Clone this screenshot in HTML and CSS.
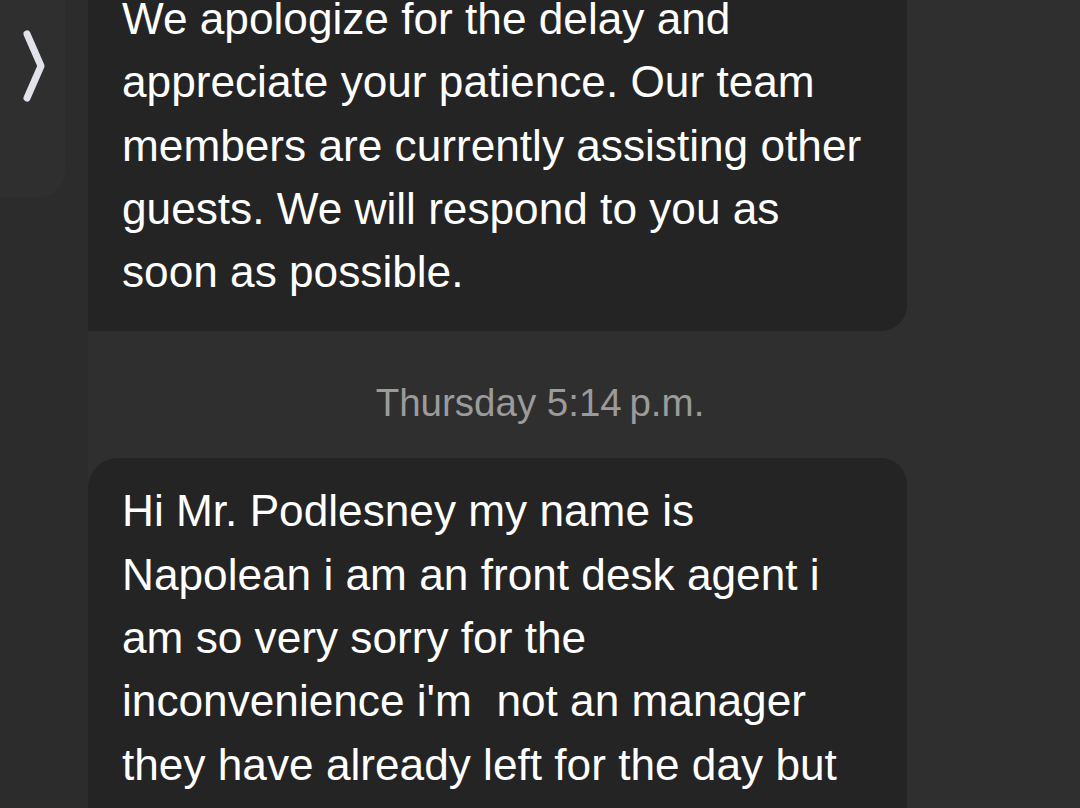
FILE: index.html
```html
<!DOCTYPE html>
<html lang="en">
<head>
<meta charset="UTF-8">
<title>Messages</title>
<link rel="stylesheet" href="styles.css">
</head>
<body>
<div class="screen">

  <div class="side">
    <div class="side-tab">
      <svg class="chevron" width="30" height="80" viewBox="0 0 30 80">
        <path d="M7 6 L21 38 L7 70" fill="none" stroke="#e2e2ea" stroke-width="7" stroke-linecap="round" stroke-linejoin="round"/>
      </svg>
    </div>
  </div>

  <div class="thread">
    <div class="bubble bubble-first">
      We apologize for the delay and<br>
      appreciate your patience. Our team<br>
      members are currently assisting other<br>
      guests. We will respond to you as<br>
      soon as possible.
    </div>

    <div class="stamp">Thursday 5:14&#8201;p.m.</div>

    <div class="bubble bubble-next">
      Hi Mr. Podlesney my name is<br>
      Napolean i am an front desk agent i<br>
      am so very sorry for the<br>
      inconvenience i'm&nbsp; not an manager<br>
      they have already left for the day but
    </div>
  </div>

</div>
</body>
</html>
```

FILE: styles.css
```css
html, body {
  margin: 0;
  height: 100%;
  overflow: hidden;
}

body {
  background-color: #2f2f2f;
  font-family: "Liberation Sans", Arial, sans-serif;
  color: #ffffff;
}

.screen {
  display: flex;
  min-height: 100%;
}

.side {
  width: 88px;
  flex-shrink: 0;
  background-color: #2c2c2c;
}

.side-tab {
  width: 65px;
  height: 197px;
  background-color: #2f2f2f;
  border-bottom-right-radius: 26px;
  display: flex;
  justify-content: center;
  padding-top: 28px;
  box-sizing: border-box;
}

.chevron {
  display: block;
  margin-left: 4px;
}

.thread {
  width: 819px;
  display: flex;
  flex-direction: column;
}

.bubble {
  background-color: #242424;
  font-size: 44.2px;
  line-height: 63.3px;
  padding: 23px 20px 28px 34px;
}

.bubble-first {
  margin-top: -36px;
  border-bottom-right-radius: 26px;
}

.bubble-next {
  border-top-left-radius: 30px;
  border-top-right-radius: 26px;
  padding-top: 21px;
  padding-bottom: 80px;
}

/* centred on the whole screen, not on the bubble column */
.stamp {
  color: #9b9b9b;
  font-size: 38.5px;
  text-align: center;
  line-height: 44px;
  margin: 50px -173px 33px -88px;
}
```
